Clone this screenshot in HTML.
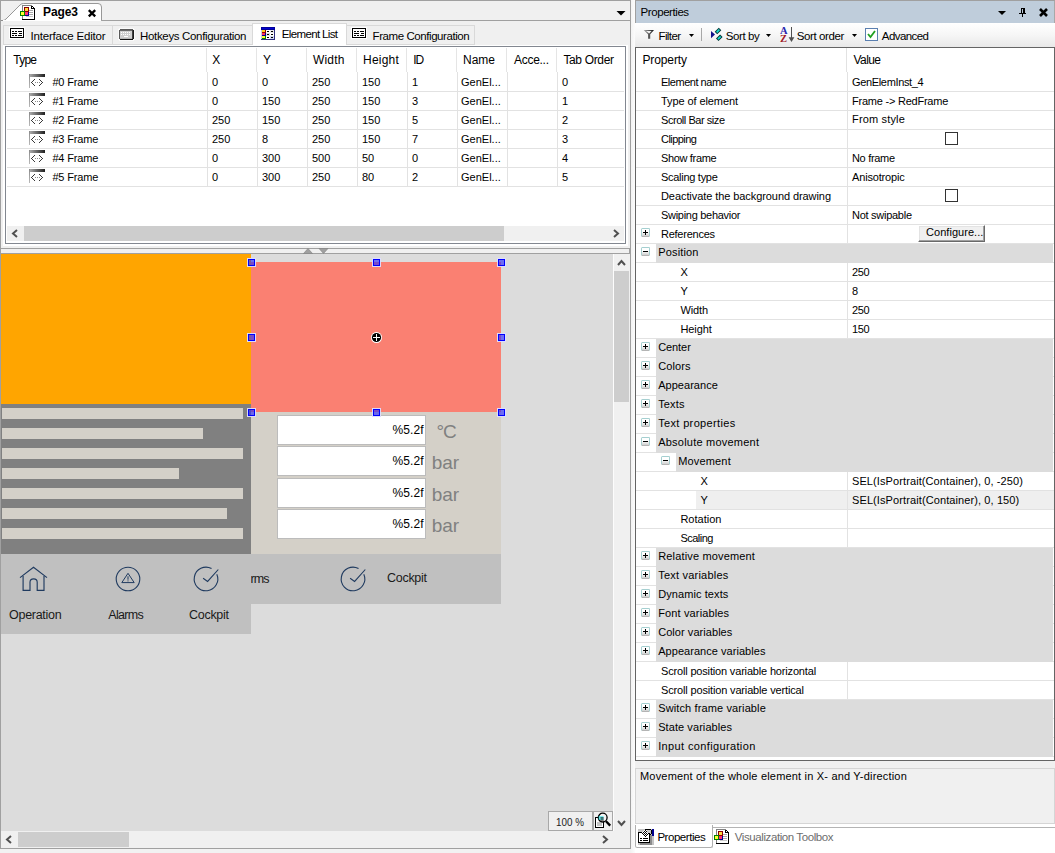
<!DOCTYPE html>
<html><head><meta charset="utf-8"><title>Page3</title>
<style>
html,body{margin:0;padding:0;}
body{width:1055px;height:853px;overflow:hidden;background:#f0f0f0;font-family:"Liberation Sans",sans-serif;font-size:11px;color:#000;position:relative;}
div,span{box-sizing:border-box;}
.a{position:absolute;}
.t{position:absolute;white-space:nowrap;line-height:13px;height:13px;}
.h{font-size:12px;line-height:14px;height:14px;}
.ln{position:absolute;background:#e2e2e2;height:1px;}
.vl{position:absolute;background:#e2e2e2;width:1px;}
.cat{position:absolute;background:#dcdcdc;left:636px;width:418px;height:19px;}
.pm{position:absolute;width:9px;height:9px;border:1px solid #a4cfd0;border-bottom-color:#b4b4b4;background:linear-gradient(#fff 40%,#cfcfcf);border-radius:1.5px;}
.pm i{position:absolute;left:1px;top:3px;width:5px;height:1px;background:#000;}
.pm b{position:absolute;left:3px;top:1px;width:1px;height:5px;background:#000;}
.hd{position:absolute;width:7px;height:7px;background:rgba(40,40,255,0.62);border:1px solid #0000ff;box-shadow:0 0 0 1px rgba(220,220,255,0.95);}
.bar{position:absolute;left:2px;height:11px;background:#d4d0c8;}
.inp{position:absolute;left:277px;width:149px;height:30px;background:#fff;border:1px solid #bcbcbc;}
.cb{position:absolute;width:13px;height:13px;border:1px solid #333;background:#fff;}
</style></head><body>

<div class="a" style="left:0;top:0;width:1055px;height:1px;background:#a0a0a0"></div>
<div class="a" style="left:0;top:20px;width:631px;height:1px;background:#a0a0a0"></div>
<div class="a" style="left:0;top:0px;width:1px;height:853px;background:#a0a0a0"></div>
<div class="a" style="left:630px;top:1px;width:1px;height:848px;background:#a0a0a0"></div>
<div class="a" style="left:631px;top:0px;width:4px;height:853px;background:linear-gradient(90deg,#f3f3f3,#fcfcfc)"></div>
<div class="a" style="left:0;top:848px;width:631px;height:1px;background:#a0a0a0"></div>
<div class="a" style="left:0;top:849px;width:631px;height:4px;background:#f2f2f2"></div>
<svg class="a" style="left:0;top:0" width="110" height="22" viewBox="0 0 110 22">
<path d="M1 20.5 L3 20.5 Q4.8 20.3 6 19 L20 5 Q21.5 3.5 23.5 3.5 L98 3.5 Q101.5 3.5 101.5 7 L101.5 20.5" fill="#fff" stroke="#8c8c8c" stroke-width="0.9"/>
<rect x="3" y="20" width="98" height="1" fill="#fff"/>
<path d="M88.8 10.1 L95.2 16.4 M95.2 10.1 L88.8 16.4" stroke="#000" stroke-width="2.3" fill="none"/>
</svg>
<svg class="a" style="left:20px;top:5px" width="15" height="15" viewBox="0 0 15 15" shape-rendering="crispEdges">
<rect x="3" y="1" width="11" height="13" fill="#fff"/>
<rect x="2" y="0" width="1" height="15" fill="#808080"/><rect x="2" y="0" width="10" height="1" fill="#808080"/>
<rect x="14" y="3" width="1" height="12" fill="#000"/><rect x="2" y="14" width="13" height="1" fill="#000"/>
<rect x="11" y="1" width="1" height="3" fill="#000"/><rect x="11" y="3" width="4" height="1" fill="#000"/>
<rect x="12" y="1" width="1" height="1" fill="#000"/><rect x="13" y="2" width="1" height="1" fill="#000"/>
<rect x="9" y="5" width="4" height="1" fill="#a8a8a8"/><rect x="9" y="7" width="4" height="1" fill="#a8a8a8"/><rect x="9" y="9" width="4" height="1" fill="#a8a8a8"/><rect x="6" y="11" width="7" height="1" fill="#c8c8c8"/>
<rect x="4" y="2" width="5" height="5" fill="#8b0000"/><rect x="5" y="3" width="3" height="3" fill="#ffd840"/>
<rect x="5" y="7" width="4" height="4" fill="#000090"/><rect x="5" y="7" width="3" height="3" fill="#ff3070"/>
<rect x="0" y="6" width="5" height="5" fill="#008000"/><rect x="1" y="7" width="3" height="3" fill="#ffff30"/>
</svg>
<div class="t" style="left:43px;top:5px;font-size:12px;line-height:14px;height:14px;font-weight:bold;letter-spacing:-0.089px;">Page3</div>
<svg class="a" style="left:616px;top:10px" width="10" height="6"><path d="M0.5 1 L9.5 1 L5 5.5 Z" fill="#000"/></svg>
<div class="a" style="left:3px;top:25px;width:110px;height:20px;background:#f0f0f0;border:1px solid #d9d9d9"></div>
<div class="a" style="left:112px;top:25px;width:141px;height:20px;background:#f0f0f0;border:1px solid #d9d9d9"></div>
<div class="a" style="left:252px;top:23px;width:95px;height:23px;background:#fff;border:1px solid #d9d9d9;border-bottom:none"></div>
<div class="a" style="left:346px;top:25px;width:129px;height:20px;background:#f0f0f0;border:1px solid #d9d9d9"></div>
<svg class="a" style="left:9px;top:27px" width="16" height="12" viewBox="-1 -1 16 12" shape-rendering="crispEdges"><rect x="-1" y="-1" width="16" height="12" fill="#fff"/><rect x="0" y="0" width="14" height="10" fill="#000"/><rect x="1" y="1" width="12" height="8" fill="#fff"/><rect x="2" y="3" width="2" height="1" fill="#000"/><rect x="5" y="3" width="2" height="1" fill="#000"/><rect x="8" y="3" width="4" height="1" fill="#000"/><rect x="2" y="5" width="5" height="1" fill="#000"/><rect x="9" y="5" width="3" height="1" fill="#000"/><rect x="2" y="7" width="2" height="1" fill="#000"/><rect x="5" y="7" width="2" height="1" fill="#000"/><rect x="8" y="7" width="4" height="1" fill="#000"/></svg>
<div class="t" style="left:30.5px;top:29px;font-size:11.5px;line-height:14px;height:14px;letter-spacing:-0.192px;">Interface Editor</div>
<svg class="a" style="left:118px;top:28px" width="17" height="13" viewBox="-1 -1 17 13" shape-rendering="crispEdges"><rect x="0" y="-1" width="15" height="13" fill="#fafafa"/><rect x="-1" y="0" width="17" height="11" fill="#fafafa"/><rect x="1" y="0" width="13" height="1" fill="#5a5a5a"/><rect x="0" y="1" width="1" height="9" fill="#5a5a5a"/><rect x="1" y="1" width="13" height="1" fill="#6a6a6a"/><rect x="14" y="1" width="1" height="9" fill="#1c1c1c"/><rect x="13" y="1" width="1" height="9" fill="#404040"/><rect x="1" y="10" width="13" height="1" fill="#101010"/><rect x="1" y="2" width="12" height="8" fill="#cfcfcf"/><rect x="1" y="9" width="12" height="1" fill="#b8b8b8"/><rect x="2" y="3" width="1" height="1" fill="#fff"/><rect x="4" y="3" width="1" height="1" fill="#fff"/><rect x="6" y="3" width="1" height="1" fill="#fff"/><rect x="8" y="3" width="1" height="1" fill="#fff"/><rect x="10" y="3" width="1" height="1" fill="#fff"/><rect x="2" y="5" width="1" height="1" fill="#fff"/><rect x="4" y="5" width="1" height="1" fill="#fff"/><rect x="6" y="5" width="1" height="1" fill="#fff"/><rect x="8" y="5" width="1" height="1" fill="#fff"/><rect x="10" y="5" width="1" height="1" fill="#fff"/><rect x="5" y="7" width="4" height="1" fill="#fff"/></svg>
<div class="t" style="left:140px;top:29px;font-size:11.5px;line-height:14px;height:14px;letter-spacing:-0.332px;">Hotkeys Configuration</div>
<svg class="a" style="left:261px;top:27px" width="14" height="13" viewBox="0 0 14 13" shape-rendering="crispEdges"><rect x="0" y="0" width="14" height="13" fill="#e8e8f0"/><rect x="0" y="0" width="14" height="3" fill="#000098"/><rect x="1" y="1" width="12" height="1" fill="#0000d0"/><rect x="13" y="3" width="1" height="10" fill="#303080"/><rect x="0" y="12" width="14" height="1" fill="#303080"/><rect x="0" y="3" width="1" height="9" fill="#c8d0e0"/>
<rect x="1" y="3" width="4" height="3" fill="#900000"/><rect x="1" y="3" width="3" height="2" fill="#ffd020"/>
<rect x="1" y="6" width="4" height="3" fill="#000090"/><rect x="1" y="6" width="3" height="2" fill="#ff3060"/>
<rect x="1" y="9" width="4" height="3" fill="#008000"/><rect x="1" y="9" width="3" height="2" fill="#ffff30"/>
<rect x="5" y="3" width="4" height="3" fill="#fff"/><rect x="9" y="3" width="4" height="3" fill="#e8e8e8"/><rect x="5" y="6" width="4" height="3" fill="#e0e0e0"/><rect x="9" y="6" width="4" height="3" fill="#fff"/><rect x="5" y="9" width="4" height="3" fill="#fff"/><rect x="9" y="9" width="4" height="3" fill="#d0d8f0"/>
<rect x="6" y="4" width="2" height="1" fill="#000"/><rect x="10" y="4" width="2" height="1" fill="#000"/><rect x="6" y="7" width="2" height="1" fill="#000"/><rect x="10" y="7" width="2" height="1" fill="#000"/><rect x="6" y="10" width="2" height="1" fill="#000"/><rect x="10" y="10" width="2" height="1" fill="#000"/></svg>
<div class="t" style="left:281.8px;top:27px;font-size:11.5px;line-height:14px;height:14px;letter-spacing:-0.643px;">Element List</div>
<svg class="a" style="left:351px;top:27px" width="16" height="12" viewBox="-1 -1 16 12" shape-rendering="crispEdges"><rect x="-1" y="-1" width="16" height="12" fill="#fff"/><rect x="0" y="0" width="14" height="10" fill="#000"/><rect x="1" y="1" width="12" height="8" fill="#fff"/><rect x="2" y="3" width="2" height="1" fill="#000"/><rect x="5" y="3" width="2" height="1" fill="#000"/><rect x="8" y="3" width="4" height="1" fill="#000"/><rect x="2" y="5" width="5" height="1" fill="#000"/><rect x="9" y="5" width="3" height="1" fill="#000"/><rect x="2" y="7" width="2" height="1" fill="#000"/><rect x="5" y="7" width="2" height="1" fill="#000"/><rect x="8" y="7" width="4" height="1" fill="#000"/></svg>
<div class="t" style="left:372.6px;top:29px;font-size:11.5px;line-height:14px;height:14px;letter-spacing:-0.429px;">Frame Configuration</div>
<div class="a" style="left:3px;top:45px;width:625px;height:201px;background:#fff"></div>
<div class="a" style="left:5px;top:46px;width:621px;height:198px;background:#fff;border:1px solid #828790"></div>
<div class="vl" style="left:206px;top:48px;height:24px;background:#e5e5e5"></div>
<div class="vl" style="left:207px;top:72px;height:115px"></div>
<div class="vl" style="left:256px;top:48px;height:24px;background:#e5e5e5"></div>
<div class="vl" style="left:257px;top:72px;height:115px"></div>
<div class="vl" style="left:306px;top:48px;height:24px;background:#e5e5e5"></div>
<div class="vl" style="left:307px;top:72px;height:115px"></div>
<div class="vl" style="left:356px;top:48px;height:24px;background:#e5e5e5"></div>
<div class="vl" style="left:357px;top:72px;height:115px"></div>
<div class="vl" style="left:406px;top:48px;height:24px;background:#e5e5e5"></div>
<div class="vl" style="left:407px;top:72px;height:115px"></div>
<div class="vl" style="left:456px;top:48px;height:24px;background:#e5e5e5"></div>
<div class="vl" style="left:457px;top:72px;height:115px"></div>
<div class="vl" style="left:506px;top:48px;height:24px;background:#e5e5e5"></div>
<div class="vl" style="left:507px;top:72px;height:115px"></div>
<div class="vl" style="left:556px;top:48px;height:24px;background:#e5e5e5"></div>
<div class="vl" style="left:557px;top:72px;height:115px"></div>
<div class="t" style="left:13.3px;top:53px;font-size:12px;line-height:14px;height:14px;letter-spacing:-0.772px;">Type</div>
<div class="t" style="left:212.3px;top:53px;font-size:12px;line-height:14px;height:14px;letter-spacing:-1.000px;">X</div>
<div class="t" style="left:263px;top:53px;font-size:12px;line-height:14px;height:14px;letter-spacing:-1.000px;">Y</div>
<div class="t" style="left:313px;top:53px;font-size:12px;line-height:14px;height:14px;letter-spacing:0.181px;">Width</div>
<div class="t" style="left:363px;top:53px;font-size:12px;line-height:14px;height:14px;letter-spacing:0.222px;">Height</div>
<div class="t" style="left:413.2px;top:53px;font-size:12px;line-height:14px;height:14px;letter-spacing:-1.000px;">ID</div>
<div class="t" style="left:463px;top:53px;font-size:12px;line-height:14px;height:14px;letter-spacing:-0.003px;">Name</div>
<div class="t" style="left:514px;top:53px;font-size:12px;line-height:14px;height:14px;letter-spacing:-0.280px;">Acce...</div>
<div class="t" style="left:563.4px;top:53px;font-size:12px;line-height:14px;height:14px;letter-spacing:-0.345px;">Tab Order</div>
<div class="ln" style="left:7px;top:91px;width:617px"></div>
<svg class="a" style="left:29px;top:74px" width="16" height="14" viewBox="0 0 16 14"><defs><linearGradient id="g0" x1="0" x2="1" y1="0" y2="0"><stop offset="0" stop-color="#b0b0b0"/><stop offset="1" stop-color="#202020"/></linearGradient><linearGradient id="v0" x1="0" x2="0" y1="0" y2="1"><stop offset="0" stop-color="#8a8a8a"/><stop offset="1" stop-color="#b8b8b8"/></linearGradient></defs><rect x="0" y="0" width="16" height="3" fill="url(#g0)"/><rect x="0" y="0" width="1" height="14" fill="url(#v0)"/><g shape-rendering="crispEdges"><rect x="2" y="8" width="1" height="1" fill="#383838"/><rect x="3" y="7" width="1" height="1" fill="#383838"/><rect x="4" y="6" width="1" height="1" fill="#383838"/><rect x="5" y="5" width="1" height="1" fill="#383838"/><rect x="3" y="9" width="1" height="1" fill="#383838"/><rect x="4" y="10" width="1" height="1" fill="#383838"/><rect x="5" y="11" width="1" height="1" fill="#383838"/><rect x="13" y="8" width="1" height="1" fill="#383838"/><rect x="12" y="7" width="1" height="1" fill="#383838"/><rect x="11" y="6" width="1" height="1" fill="#383838"/><rect x="10" y="5" width="1" height="1" fill="#383838"/><rect x="12" y="9" width="1" height="1" fill="#383838"/><rect x="11" y="10" width="1" height="1" fill="#383838"/><rect x="10" y="11" width="1" height="1" fill="#383838"/><rect x="6" y="8" width="1" height="1" fill="#8a8a8a"/><rect x="8" y="8" width="1" height="1" fill="#8a8a8a"/><rect x="10" y="8" width="1" height="1" fill="#8a8a8a"/></g></svg>
<div class="t" style="left:52.4px;top:76px;font-size:11px;line-height:13px;height:13px;letter-spacing:-0.167px;">#0 Frame</div>
<div class="t" style="left:212px;top:76px">0</div>
<div class="t" style="left:262px;top:76px">0</div>
<div class="t" style="left:312px;top:76px">250</div>
<div class="t" style="left:362px;top:76px">150</div>
<div class="t" style="left:412px;top:76px">1</div>
<div class="t" style="left:461px;top:76px">GenEl...</div>
<div class="t" style="left:562px;top:76px">0</div>
<div class="ln" style="left:7px;top:110px;width:617px"></div>
<svg class="a" style="left:29px;top:93px" width="16" height="14" viewBox="0 0 16 14"><defs><linearGradient id="g1" x1="0" x2="1" y1="0" y2="0"><stop offset="0" stop-color="#b0b0b0"/><stop offset="1" stop-color="#202020"/></linearGradient><linearGradient id="v1" x1="0" x2="0" y1="0" y2="1"><stop offset="0" stop-color="#8a8a8a"/><stop offset="1" stop-color="#b8b8b8"/></linearGradient></defs><rect x="0" y="0" width="16" height="3" fill="url(#g1)"/><rect x="0" y="0" width="1" height="14" fill="url(#v1)"/><g shape-rendering="crispEdges"><rect x="2" y="8" width="1" height="1" fill="#383838"/><rect x="3" y="7" width="1" height="1" fill="#383838"/><rect x="4" y="6" width="1" height="1" fill="#383838"/><rect x="5" y="5" width="1" height="1" fill="#383838"/><rect x="3" y="9" width="1" height="1" fill="#383838"/><rect x="4" y="10" width="1" height="1" fill="#383838"/><rect x="5" y="11" width="1" height="1" fill="#383838"/><rect x="13" y="8" width="1" height="1" fill="#383838"/><rect x="12" y="7" width="1" height="1" fill="#383838"/><rect x="11" y="6" width="1" height="1" fill="#383838"/><rect x="10" y="5" width="1" height="1" fill="#383838"/><rect x="12" y="9" width="1" height="1" fill="#383838"/><rect x="11" y="10" width="1" height="1" fill="#383838"/><rect x="10" y="11" width="1" height="1" fill="#383838"/><rect x="6" y="8" width="1" height="1" fill="#8a8a8a"/><rect x="8" y="8" width="1" height="1" fill="#8a8a8a"/><rect x="10" y="8" width="1" height="1" fill="#8a8a8a"/></g></svg>
<div class="t" style="left:52.4px;top:95px;font-size:11px;line-height:13px;height:13px;letter-spacing:-0.167px;">#1 Frame</div>
<div class="t" style="left:212px;top:95px">0</div>
<div class="t" style="left:262px;top:95px">150</div>
<div class="t" style="left:312px;top:95px">250</div>
<div class="t" style="left:362px;top:95px">150</div>
<div class="t" style="left:412px;top:95px">3</div>
<div class="t" style="left:461px;top:95px">GenEl...</div>
<div class="t" style="left:562px;top:95px">1</div>
<div class="ln" style="left:7px;top:129px;width:617px"></div>
<svg class="a" style="left:29px;top:112px" width="16" height="14" viewBox="0 0 16 14"><defs><linearGradient id="g2" x1="0" x2="1" y1="0" y2="0"><stop offset="0" stop-color="#b0b0b0"/><stop offset="1" stop-color="#202020"/></linearGradient><linearGradient id="v2" x1="0" x2="0" y1="0" y2="1"><stop offset="0" stop-color="#8a8a8a"/><stop offset="1" stop-color="#b8b8b8"/></linearGradient></defs><rect x="0" y="0" width="16" height="3" fill="url(#g2)"/><rect x="0" y="0" width="1" height="14" fill="url(#v2)"/><g shape-rendering="crispEdges"><rect x="2" y="8" width="1" height="1" fill="#383838"/><rect x="3" y="7" width="1" height="1" fill="#383838"/><rect x="4" y="6" width="1" height="1" fill="#383838"/><rect x="5" y="5" width="1" height="1" fill="#383838"/><rect x="3" y="9" width="1" height="1" fill="#383838"/><rect x="4" y="10" width="1" height="1" fill="#383838"/><rect x="5" y="11" width="1" height="1" fill="#383838"/><rect x="13" y="8" width="1" height="1" fill="#383838"/><rect x="12" y="7" width="1" height="1" fill="#383838"/><rect x="11" y="6" width="1" height="1" fill="#383838"/><rect x="10" y="5" width="1" height="1" fill="#383838"/><rect x="12" y="9" width="1" height="1" fill="#383838"/><rect x="11" y="10" width="1" height="1" fill="#383838"/><rect x="10" y="11" width="1" height="1" fill="#383838"/><rect x="6" y="8" width="1" height="1" fill="#8a8a8a"/><rect x="8" y="8" width="1" height="1" fill="#8a8a8a"/><rect x="10" y="8" width="1" height="1" fill="#8a8a8a"/></g></svg>
<div class="t" style="left:52.4px;top:114px;font-size:11px;line-height:13px;height:13px;letter-spacing:-0.167px;">#2 Frame</div>
<div class="t" style="left:212px;top:114px">250</div>
<div class="t" style="left:262px;top:114px">150</div>
<div class="t" style="left:312px;top:114px">250</div>
<div class="t" style="left:362px;top:114px">150</div>
<div class="t" style="left:412px;top:114px">5</div>
<div class="t" style="left:461px;top:114px">GenEl...</div>
<div class="t" style="left:562px;top:114px">2</div>
<div class="ln" style="left:7px;top:148px;width:617px"></div>
<svg class="a" style="left:29px;top:131px" width="16" height="14" viewBox="0 0 16 14"><defs><linearGradient id="g3" x1="0" x2="1" y1="0" y2="0"><stop offset="0" stop-color="#b0b0b0"/><stop offset="1" stop-color="#202020"/></linearGradient><linearGradient id="v3" x1="0" x2="0" y1="0" y2="1"><stop offset="0" stop-color="#8a8a8a"/><stop offset="1" stop-color="#b8b8b8"/></linearGradient></defs><rect x="0" y="0" width="16" height="3" fill="url(#g3)"/><rect x="0" y="0" width="1" height="14" fill="url(#v3)"/><g shape-rendering="crispEdges"><rect x="2" y="8" width="1" height="1" fill="#383838"/><rect x="3" y="7" width="1" height="1" fill="#383838"/><rect x="4" y="6" width="1" height="1" fill="#383838"/><rect x="5" y="5" width="1" height="1" fill="#383838"/><rect x="3" y="9" width="1" height="1" fill="#383838"/><rect x="4" y="10" width="1" height="1" fill="#383838"/><rect x="5" y="11" width="1" height="1" fill="#383838"/><rect x="13" y="8" width="1" height="1" fill="#383838"/><rect x="12" y="7" width="1" height="1" fill="#383838"/><rect x="11" y="6" width="1" height="1" fill="#383838"/><rect x="10" y="5" width="1" height="1" fill="#383838"/><rect x="12" y="9" width="1" height="1" fill="#383838"/><rect x="11" y="10" width="1" height="1" fill="#383838"/><rect x="10" y="11" width="1" height="1" fill="#383838"/><rect x="6" y="8" width="1" height="1" fill="#8a8a8a"/><rect x="8" y="8" width="1" height="1" fill="#8a8a8a"/><rect x="10" y="8" width="1" height="1" fill="#8a8a8a"/></g></svg>
<div class="t" style="left:52.4px;top:133px;font-size:11px;line-height:13px;height:13px;letter-spacing:-0.167px;">#3 Frame</div>
<div class="t" style="left:212px;top:133px">250</div>
<div class="t" style="left:262px;top:133px">8</div>
<div class="t" style="left:312px;top:133px">250</div>
<div class="t" style="left:362px;top:133px">150</div>
<div class="t" style="left:412px;top:133px">7</div>
<div class="t" style="left:461px;top:133px">GenEl...</div>
<div class="t" style="left:562px;top:133px">3</div>
<div class="ln" style="left:7px;top:167px;width:617px"></div>
<svg class="a" style="left:29px;top:150px" width="16" height="14" viewBox="0 0 16 14"><defs><linearGradient id="g4" x1="0" x2="1" y1="0" y2="0"><stop offset="0" stop-color="#b0b0b0"/><stop offset="1" stop-color="#202020"/></linearGradient><linearGradient id="v4" x1="0" x2="0" y1="0" y2="1"><stop offset="0" stop-color="#8a8a8a"/><stop offset="1" stop-color="#b8b8b8"/></linearGradient></defs><rect x="0" y="0" width="16" height="3" fill="url(#g4)"/><rect x="0" y="0" width="1" height="14" fill="url(#v4)"/><g shape-rendering="crispEdges"><rect x="2" y="8" width="1" height="1" fill="#383838"/><rect x="3" y="7" width="1" height="1" fill="#383838"/><rect x="4" y="6" width="1" height="1" fill="#383838"/><rect x="5" y="5" width="1" height="1" fill="#383838"/><rect x="3" y="9" width="1" height="1" fill="#383838"/><rect x="4" y="10" width="1" height="1" fill="#383838"/><rect x="5" y="11" width="1" height="1" fill="#383838"/><rect x="13" y="8" width="1" height="1" fill="#383838"/><rect x="12" y="7" width="1" height="1" fill="#383838"/><rect x="11" y="6" width="1" height="1" fill="#383838"/><rect x="10" y="5" width="1" height="1" fill="#383838"/><rect x="12" y="9" width="1" height="1" fill="#383838"/><rect x="11" y="10" width="1" height="1" fill="#383838"/><rect x="10" y="11" width="1" height="1" fill="#383838"/><rect x="6" y="8" width="1" height="1" fill="#8a8a8a"/><rect x="8" y="8" width="1" height="1" fill="#8a8a8a"/><rect x="10" y="8" width="1" height="1" fill="#8a8a8a"/></g></svg>
<div class="t" style="left:52.4px;top:152px;font-size:11px;line-height:13px;height:13px;letter-spacing:-0.167px;">#4 Frame</div>
<div class="t" style="left:212px;top:152px">0</div>
<div class="t" style="left:262px;top:152px">300</div>
<div class="t" style="left:312px;top:152px">500</div>
<div class="t" style="left:362px;top:152px">50</div>
<div class="t" style="left:412px;top:152px">0</div>
<div class="t" style="left:461px;top:152px">GenEl...</div>
<div class="t" style="left:562px;top:152px">4</div>
<div class="ln" style="left:7px;top:186px;width:617px"></div>
<svg class="a" style="left:29px;top:169px" width="16" height="14" viewBox="0 0 16 14"><defs><linearGradient id="g5" x1="0" x2="1" y1="0" y2="0"><stop offset="0" stop-color="#b0b0b0"/><stop offset="1" stop-color="#202020"/></linearGradient><linearGradient id="v5" x1="0" x2="0" y1="0" y2="1"><stop offset="0" stop-color="#8a8a8a"/><stop offset="1" stop-color="#b8b8b8"/></linearGradient></defs><rect x="0" y="0" width="16" height="3" fill="url(#g5)"/><rect x="0" y="0" width="1" height="14" fill="url(#v5)"/><g shape-rendering="crispEdges"><rect x="2" y="8" width="1" height="1" fill="#383838"/><rect x="3" y="7" width="1" height="1" fill="#383838"/><rect x="4" y="6" width="1" height="1" fill="#383838"/><rect x="5" y="5" width="1" height="1" fill="#383838"/><rect x="3" y="9" width="1" height="1" fill="#383838"/><rect x="4" y="10" width="1" height="1" fill="#383838"/><rect x="5" y="11" width="1" height="1" fill="#383838"/><rect x="13" y="8" width="1" height="1" fill="#383838"/><rect x="12" y="7" width="1" height="1" fill="#383838"/><rect x="11" y="6" width="1" height="1" fill="#383838"/><rect x="10" y="5" width="1" height="1" fill="#383838"/><rect x="12" y="9" width="1" height="1" fill="#383838"/><rect x="11" y="10" width="1" height="1" fill="#383838"/><rect x="10" y="11" width="1" height="1" fill="#383838"/><rect x="6" y="8" width="1" height="1" fill="#8a8a8a"/><rect x="8" y="8" width="1" height="1" fill="#8a8a8a"/><rect x="10" y="8" width="1" height="1" fill="#8a8a8a"/></g></svg>
<div class="t" style="left:52.4px;top:171px;font-size:11px;line-height:13px;height:13px;letter-spacing:-0.167px;">#5 Frame</div>
<div class="t" style="left:212px;top:171px">0</div>
<div class="t" style="left:262px;top:171px">300</div>
<div class="t" style="left:312px;top:171px">250</div>
<div class="t" style="left:362px;top:171px">80</div>
<div class="t" style="left:412px;top:171px">2</div>
<div class="t" style="left:461px;top:171px">GenEl...</div>
<div class="t" style="left:562px;top:171px">5</div>
<div class="a" style="left:7px;top:226px;width:617px;height:15px;background:#f0f0f0"></div>
<div class="a" style="left:24px;top:226px;width:480px;height:15px;background:#cdcdcd"></div>
<svg class="a" style="left:11px;top:229px" width="8" height="9"><path d="M6 1 L2 4.5 L6 8" fill="none" stroke="#505050" stroke-width="2"/></svg>
<svg class="a" style="left:612px;top:229px" width="8" height="9"><path d="M2 1 L6 4.5 L2 8" fill="none" stroke="#505050" stroke-width="2"/></svg>
<div class="a" style="left:1px;top:246px;width:629px;height:2px;background:#f0f0f0"></div>
<div class="a" style="left:1px;top:248px;width:629px;height:1px;background:#a0a0a0"></div>
<div class="a" style="left:1px;top:253px;width:629px;height:1px;background:#a0a0a0"></div>
<div class="a" style="left:629px;top:248px;width:1px;height:6px;background:#a0a0a0"></div>
<svg class="a" style="left:302px;top:248px" width="28" height="6"><path d="M1.5 5.5 L6 0.5 L10.5 5.5 Z" fill="#a0a0a0" stroke="#808080" stroke-width="0.6"/><path d="M17 0.5 L26 0.5 L21.5 5.5 Z" fill="#a0a0a0" stroke="#808080" stroke-width="0.6"/></svg>
<div class="a" style="left:1px;top:254px;width:612px;height:577px;background:#dcdcdc;overflow:hidden">
</div>
<div class="a" style="left:1px;top:254px;width:250px;height:150px;background:#ffa500"></div>
<div class="a" style="left:251px;top:262px;width:250px;height:150px;background:#fa8072"></div>
<div class="a" style="left:1px;top:404px;width:250px;height:150px;background:#808080"></div>
<div class="bar" style="top:408px;width:241px"></div>
<div class="bar" style="top:428px;width:201px"></div>
<div class="bar" style="top:448px;width:241px"></div>
<div class="bar" style="top:468px;width:177px"></div>
<div class="bar" style="top:488px;width:241px"></div>
<div class="bar" style="top:508px;width:225px"></div>
<div class="bar" style="top:528px;width:241px"></div>
<div class="a" style="left:251px;top:412px;width:250px;height:142px;background:#d4d0c8"></div>
<div class="inp" style="top:415px"></div>
<div class="t" style="left:392.5px;top:423px;font-size:12px;line-height:14px;height:14px;letter-spacing:0.079px;">%5.2f</div>
<div class="t" style="left:436.5px;top:420px;font-size:19px;line-height:24px;height:24px;color:#808080;letter-spacing:-1.000px;">°C</div>
<div class="inp" style="top:446px"></div>
<div class="t" style="left:392.5px;top:454px;font-size:12px;line-height:14px;height:14px;letter-spacing:0.079px;">%5.2f</div>
<div class="t" style="left:431.7px;top:451px;font-size:19px;line-height:24px;height:24px;color:#808080;letter-spacing:-0.080px;">bar</div>
<div class="inp" style="top:478px"></div>
<div class="t" style="left:392.5px;top:486px;font-size:12px;line-height:14px;height:14px;letter-spacing:0.079px;">%5.2f</div>
<div class="t" style="left:431.7px;top:483px;font-size:19px;line-height:24px;height:24px;color:#808080;letter-spacing:-0.080px;">bar</div>
<div class="inp" style="top:509px"></div>
<div class="t" style="left:392.5px;top:517px;font-size:12px;line-height:14px;height:14px;letter-spacing:0.079px;">%5.2f</div>
<div class="t" style="left:431.7px;top:514px;font-size:19px;line-height:24px;height:24px;color:#808080;letter-spacing:-0.080px;">bar</div>
<div class="a" style="left:251px;top:554px;width:250px;height:50px;background:#c0c0c0"></div>
<div class="a" style="left:1px;top:554px;width:250px;height:80px;background:#c0c0c0"></div>
<svg class="a" style="left:0px;top:554px" width="60" height="50" viewBox="0 554 60 50"><path d="M20 577.6 L33.5 567.2 L47 577.6" fill="none" stroke="#1f3a5f" stroke-width="1.15"/><path d="M23.1 576 L23.1 590.4 L30 590.4 L30 582.2 Q30 578.8 33.6 578.8 Q37.2 578.8 37.2 582.2 L37.2 590.4 L44 590.4 L44 576" fill="none" stroke="#1f3a5f" stroke-width="1.15"/></svg>
<svg class="a" style="left:112.5px;top:563.7px" width="30" height="30" viewBox="0 0 30 30"><circle cx="15" cy="15" r="11.8" fill="none" stroke="#1f3a5f" stroke-width="1.1"/><path d="M15 9.3 L21.2 18.6 L8.8 18.6 Z" fill="none" stroke="#1f3a5f" stroke-width="1"/><rect x="14.5" y="12.3" width="1" height="3.4" fill="#1f3a5f"/><rect x="14.5" y="16.4" width="1" height="1" fill="#1f3a5f"/></svg>
<svg class="a" style="left:191.2px;top:563.7px" width="30" height="30" viewBox="0 0 30 30"><path d="M25.78 10.20 A11.8 11.8 0 1 1 20.54 4.58" fill="none" stroke="#1f3a5f" stroke-width="1.1"/><path d="M12.1 14.3 L16.6 17.4 L27.3 5.5" fill="none" stroke="#1f3a5f" stroke-width="1.1"/></svg>
<div class="t" style="left:9.1px;top:608px;font-size:12.5px;line-height:15px;height:15px;color:#1a1a1a;letter-spacing:-0.299px;">Operation</div>
<div class="t" style="left:108.3px;top:608px;font-size:12.5px;line-height:15px;height:15px;color:#1a1a1a;letter-spacing:-0.678px;">Alarms</div>
<div class="t" style="left:189px;top:608px;font-size:12.5px;line-height:15px;height:15px;color:#1a1a1a;letter-spacing:-0.280px;">Cockpit</div>
<div class="a" style="left:251px;top:572px;width:30px;height:15px;overflow:hidden"><div class="t" style="left:-0.4px;top:0px;font-size:12.5px;line-height:15px;height:15px;color:#1a1a1a;letter-spacing:-1.000px;">rms</div></div>
<svg class="a" style="left:337.8px;top:564px" width="30" height="30" viewBox="0 0 30 30"><path d="M25.78 10.20 A11.8 11.8 0 1 1 20.54 4.58" fill="none" stroke="#1f3a5f" stroke-width="1.1"/><path d="M12.1 14.3 L16.6 17.4 L27.3 5.5" fill="none" stroke="#1f3a5f" stroke-width="1.1"/></svg>
<div class="t" style="left:387px;top:571px;font-size:12.5px;line-height:15px;height:15px;color:#1a1a1a;letter-spacing:-0.280px;">Cockpit</div>
<div class="hd" style="left:248px;top:259px"></div>
<div class="hd" style="left:373px;top:259px"></div>
<div class="hd" style="left:498px;top:259px"></div>
<div class="hd" style="left:248px;top:334px"></div>
<div class="hd" style="left:498px;top:334px"></div>
<div class="hd" style="left:248px;top:409px"></div>
<div class="hd" style="left:373px;top:409px"></div>
<div class="hd" style="left:498px;top:409px"></div>
<svg class="a" style="left:370px;top:331px" width="13" height="13" viewBox="0 0 13 13"><circle cx="6.5" cy="6.5" r="5.5" fill="#fff"/><circle cx="6.5" cy="6.5" r="4.6" fill="#000"/><rect x="6" y="3" width="1" height="7" fill="#fff"/><rect x="3" y="6" width="7" height="1" fill="#fff"/></svg>
<div class="a" style="left:613px;top:254px;width:17px;height:577px;background:#f0f0f0"></div>
<div class="a" style="left:613px;top:254px;width:1px;height:577px;background:#fcfcfc"></div>
<div class="a" style="left:614px;top:271px;width:15px;height:131px;background:#cdcdcd"></div>
<svg class="a" style="left:617px;top:259px" width="9" height="8"><path d="M1 6 L4.5 2 L8 6" fill="none" stroke="#505050" stroke-width="2"/></svg>
<svg class="a" style="left:617px;top:819px" width="9" height="8"><path d="M1 2 L4.5 6 L8 2" fill="none" stroke="#505050" stroke-width="2"/></svg>
<div class="a" style="left:1px;top:831px;width:629px;height:17px;background:#f0f0f0"></div>
<div class="a" style="left:18px;top:832px;width:111px;height:15px;background:#cdcdcd"></div>
<svg class="a" style="left:5px;top:835px" width="8" height="9"><path d="M6 1 L2 4.5 L6 8" fill="none" stroke="#505050" stroke-width="2"/></svg>
<svg class="a" style="left:601px;top:835px" width="8" height="9"><path d="M2 1 L6 4.5 L2 8" fill="none" stroke="#505050" stroke-width="2"/></svg>
<div class="a" style="left:548px;top:811px;width:45px;height:20px;background:#f0f0f0;border:1px solid #a8a8a8"></div>
<div class="t" style="left:555.8px;top:815px;font-size:11.5px;line-height:14px;height:14px;color:#222;transform:scaleX(0.8556);transform-origin:0 0;">100 %</div>
<div class="a" style="left:593px;top:811px;width:20px;height:20px;background:#f0f0f0;border:1px solid #a8a8a8"></div>
<svg class="a" style="left:595px;top:812px" width="17" height="17" viewBox="0 0 17 17"><rect x="0.5" y="5.5" width="8" height="10" fill="#fff" stroke="#000"/><rect x="2" y="10" width="5" height="4" fill="#c4c4c4"/><circle cx="7.7" cy="5.6" r="4.4" fill="#f4f4f4" fill-opacity="0.85" stroke="#000" stroke-width="1.3"/><path d="M11 9.2 L15.2 13.6" stroke="#000" stroke-width="2.3"/><rect x="3.5" y="4.5" width="5" height="1" fill="#00e8f0"/><rect x="3.5" y="6.5" width="5" height="1" fill="#00e8f0"/><rect x="5.5" y="5.5" width="3" height="1" fill="#000"/><rect x="5.5" y="7.5" width="3" height="1" fill="#000"/></svg><div class="a" style="left:635px;top:1px;width:420px;height:22px;background:#bfcddb"></div>
<div class="a" style="left:635px;top:0px;width:1px;height:23px;background:#a0a0a0"></div>
<div class="t" style="left:640.6px;top:5px;font-size:11.5px;line-height:14px;height:14px;letter-spacing:-0.435px;">Properties</div>
<svg class="a" style="left:998px;top:11px" width="9" height="5"><path d="M0 0 L8 0 L4 4 Z" fill="#000"/></svg>
<svg class="a" style="left:1019px;top:8px" width="7" height="10" viewBox="0 0 7 10" shape-rendering="crispEdges"><rect x="2" y="0" width="4" height="1" fill="#000"/><rect x="2" y="0" width="1" height="5" fill="#000"/><rect x="4" y="0" width="2" height="5" fill="#000"/><rect x="0" y="5" width="7" height="1" fill="#000"/><rect x="3" y="6" width="1" height="3" fill="#000"/></svg>
<svg class="a" style="left:1038px;top:7px" width="11" height="11"><path d="M2 2 L9 9 M9 2 L2 9" stroke="#000" stroke-width="2.6" fill="none"/></svg>
<div class="a" style="left:1054px;top:1px;width:1px;height:22px;background:#a8a8a8"></div>
<div class="a" style="left:635px;top:23px;width:420px;height:24px;background:linear-gradient(#ffffff,#f6f6f6 50%,#e8e8e8)"></div>
<svg class="a" style="left:643px;top:29px" width="12" height="11" viewBox="0 0 12 11"><defs><linearGradient id="fg" x1="0" x2="1"><stop offset="0" stop-color="#b0b0b0"/><stop offset="0.5" stop-color="#606060"/><stop offset="1" stop-color="#101010"/></linearGradient></defs><path d="M0.6 1 L11 1 L7.2 5.2 L7.2 9.8 L5 9.8 L5 5.2 Z" fill="url(#fg)"/><path d="M3 2 L8.6 2 L6.1 4.6 Z" fill="#f2f2f2"/></svg>
<div class="t" style="left:658.5px;top:29px;font-size:11.5px;line-height:14px;height:14px;letter-spacing:-0.611px;">Filter</div>
<svg class="a" style="left:689px;top:34px" width="5" height="3"><path d="M0 0 L5 0 L2.5 3 Z" fill="#000"/></svg>
<div class="a" style="left:701px;top:28px;width:1px;height:13px;background:#a8a8a8"></div>
<svg class="a" style="left:710px;top:27px" width="15" height="15" viewBox="0 0 15 15"><path d="M1 4 L5 7.6 L1 11.2 Z" fill="#10108a"/><rect x="5.6" y="2.7" width="4.8" height="2.6" transform="rotate(-45 8 4)" fill="#10e0d8" stroke="#083838" stroke-width="1"/><rect x="6.9" y="9.5" width="4.8" height="2.6" transform="rotate(-45 9.3 10.8)" fill="#10e0d8" stroke="#083838" stroke-width="1"/></svg>
<div class="t" style="left:725.8px;top:29px;font-size:11.5px;line-height:14px;height:14px;letter-spacing:-0.405px;">Sort by</div>
<svg class="a" style="left:766px;top:34px" width="5" height="3"><path d="M0 0 L5 0 L2.5 3 Z" fill="#000"/></svg>
<div class="t" style="left:780px;top:26px;font-family:'Liberation Serif',serif;font-size:10.5px;font-weight:bold;color:#2828b0;line-height:9px;height:9px">A</div>
<div class="t" style="left:780px;top:34px;font-family:'Liberation Serif',serif;font-size:10.5px;font-weight:bold;color:#a01828;line-height:9px;height:9px">Z</div>
<svg class="a" style="left:788px;top:26px" width="7" height="17" viewBox="0 0 7 17"><rect x="3" y="1" width="1" height="11.5" fill="#505050"/><path d="M0.6 11.3 L6.4 11.3 L3.5 16 Z" fill="#505050"/></svg>
<div class="t" style="left:796.7px;top:29px;font-size:11.5px;line-height:14px;height:14px;letter-spacing:-0.392px;">Sort order</div>
<svg class="a" style="left:852px;top:34px" width="5" height="3"><path d="M0 0 L5 0 L2.5 3 Z" fill="#000"/></svg>
<div class="a" style="left:865px;top:28px;width:13px;height:13px;border:1px solid #5a7fb0;background:#fff"></div>
<svg class="a" style="left:867px;top:30px" width="9" height="9"><path d="M1 4 L3.5 7 L8 1" stroke="#20a020" stroke-width="1.8" fill="none"/></svg>
<div class="t" style="left:881.8px;top:29px;font-size:11.5px;line-height:14px;height:14px;letter-spacing:-0.564px;">Advanced</div>
<div class="a" style="left:635px;top:47px;width:420px;height:714px;background:#fff;border:1px solid #646464"></div>
<div class="t" style="left:642.4px;top:53px;font-size:12px;line-height:14px;height:14px;letter-spacing:-0.107px;">Property</div>
<div class="t" style="left:853.6px;top:53px;font-size:12px;line-height:14px;height:14px;letter-spacing:-0.600px;">Value</div>
<div class="vl" style="left:846px;top:48px;height:24px"></div>
<div class="ln" style="left:636px;top:91px;width:418px"></div>
<div class="vl" style="left:847px;top:72px;height:19px"></div>
<div class="t" style="left:661px;top:76px;font-size:11px;line-height:13px;height:13px;letter-spacing:-0.475px;">Element name</div>
<div class="t" style="left:852px;top:76px;font-size:11px;line-height:13px;height:13px;letter-spacing:-0.343px;">GenElemInst_4</div>
<div class="ln" style="left:636px;top:110px;width:418px"></div>
<div class="vl" style="left:847px;top:92px;height:18px"></div>
<div class="t" style="left:661px;top:95px;font-size:11px;line-height:13px;height:13px;letter-spacing:-0.091px;">Type of element</div>
<div class="t" style="left:852px;top:95px;font-size:11px;line-height:13px;height:13px;letter-spacing:-0.228px;">Frame -&gt; RedFrame</div>
<div class="ln" style="left:636px;top:129px;width:418px"></div>
<div class="vl" style="left:847px;top:111px;height:18px"></div>
<div class="t" style="left:661px;top:114px;font-size:11px;line-height:13px;height:13px;letter-spacing:-0.450px;">Scroll Bar size</div>
<div class="t" style="left:852px;top:113px;font-size:11px;line-height:13px;height:13px;letter-spacing:0.163px;">From style</div>
<div class="ln" style="left:636px;top:148px;width:418px"></div>
<div class="vl" style="left:847px;top:130px;height:18px"></div>
<div class="t" style="left:661px;top:133px;font-size:11px;line-height:13px;height:13px;letter-spacing:-0.549px;">Clipping</div>
<div class="cb" style="left:945px;top:132px"></div>
<div class="ln" style="left:636px;top:167px;width:418px"></div>
<div class="vl" style="left:847px;top:149px;height:18px"></div>
<div class="t" style="left:661px;top:152px;font-size:11px;line-height:13px;height:13px;letter-spacing:-0.343px;">Show frame</div>
<div class="t" style="left:852px;top:152px;font-size:11px;line-height:13px;height:13px;letter-spacing:-0.319px;">No frame</div>
<div class="ln" style="left:636px;top:186px;width:418px"></div>
<div class="vl" style="left:847px;top:168px;height:18px"></div>
<div class="t" style="left:661px;top:171px;font-size:11px;line-height:13px;height:13px;letter-spacing:-0.284px;">Scaling type</div>
<div class="t" style="left:852px;top:171px;font-size:11px;line-height:13px;height:13px;letter-spacing:-0.161px;">Anisotropic</div>
<div class="ln" style="left:636px;top:205px;width:418px"></div>
<div class="vl" style="left:847px;top:187px;height:18px"></div>
<div class="t" style="left:661px;top:190px;font-size:11px;line-height:13px;height:13px;letter-spacing:-0.076px;">Deactivate the background drawing</div>
<div class="cb" style="left:945px;top:189px"></div>
<div class="ln" style="left:636px;top:224px;width:418px"></div>
<div class="vl" style="left:847px;top:206px;height:18px"></div>
<div class="t" style="left:661px;top:209px;font-size:11px;line-height:13px;height:13px;letter-spacing:-0.292px;">Swiping behavior</div>
<div class="t" style="left:852px;top:209px;font-size:11px;line-height:13px;height:13px;letter-spacing:-0.271px;">Not swipable</div>
<div class="ln" style="left:636px;top:243px;width:418px"></div>
<div class="vl" style="left:847px;top:225px;height:18px"></div>
<div class="pm" style="left:641px;top:228px"><i></i><b></b></div>
<div class="t" style="left:661px;top:228px;font-size:11px;line-height:13px;height:13px;letter-spacing:-0.250px;">References</div>
<div class="a" style="left:918px;top:225px;width:67px;height:17px;background:#f0f0f0;border:1px solid #fff;border-right-color:#696969;border-bottom-color:#696969;box-shadow:inset -1px -1px 0 #a0a0a0, inset 1px 1px 0 #e3e3e3"></div>
<div class="t" style="left:926px;top:226px;font-size:11px;line-height:13px;height:13px;letter-spacing:0.040px;">Configure...</div>
<div class="ln" style="left:636px;top:262px;width:418px"></div>
<div class="a" style="left:656px;top:244px;width:397px;height:19px;background:#dcdcdc"></div>
<div class="pm" style="left:641px;top:247px"><i></i></div>
<div class="t" style="left:658.2px;top:246px;font-size:11px;line-height:13px;height:13px;letter-spacing:0.167px;">Position</div>
<div class="ln" style="left:636px;top:281px;width:418px"></div>
<div class="vl" style="left:847px;top:263px;height:18px"></div>
<div class="t" style="left:680.4px;top:266px;font-size:11px;line-height:13px;height:13px;letter-spacing:-0.737px;">X</div>
<div class="t" style="left:852px;top:266px;font-size:11px;line-height:13px;height:13px;letter-spacing:-0.326px;">250</div>
<div class="ln" style="left:636px;top:300px;width:418px"></div>
<div class="vl" style="left:847px;top:282px;height:18px"></div>
<div class="t" style="left:680.4px;top:285px;font-size:11px;line-height:13px;height:13px;letter-spacing:-0.737px;">Y</div>
<div class="t" style="left:852px;top:285px;font-size:11px;line-height:13px;height:13px;letter-spacing:0.182px;">8</div>
<div class="ln" style="left:636px;top:319px;width:418px"></div>
<div class="vl" style="left:847px;top:301px;height:18px"></div>
<div class="t" style="left:680.4px;top:304px;font-size:11px;line-height:13px;height:13px;letter-spacing:-0.079px;">Width</div>
<div class="t" style="left:852px;top:304px;font-size:11px;line-height:13px;height:13px;letter-spacing:-0.326px;">250</div>
<div class="ln" style="left:636px;top:338px;width:418px"></div>
<div class="vl" style="left:847px;top:320px;height:18px"></div>
<div class="t" style="left:680.4px;top:323px;font-size:11px;line-height:13px;height:13px;letter-spacing:-0.079px;">Height</div>
<div class="t" style="left:852px;top:323px;font-size:11px;line-height:13px;height:13px;letter-spacing:-0.326px;">150</div>
<div class="ln" style="left:636px;top:357px;width:418px"></div>
<div class="a" style="left:656px;top:339px;width:397px;height:19px;background:#dcdcdc"></div>
<div class="pm" style="left:641px;top:342px"><i></i><b></b></div>
<div class="t" style="left:658.2px;top:341px;font-size:11px;line-height:13px;height:13px;letter-spacing:-0.083px;">Center</div>
<div class="ln" style="left:636px;top:376px;width:418px"></div>
<div class="a" style="left:656px;top:358px;width:397px;height:19px;background:#dcdcdc"></div>
<div class="pm" style="left:641px;top:361px"><i></i><b></b></div>
<div class="t" style="left:658.2px;top:360px;font-size:11px;line-height:13px;height:13px;letter-spacing:0.083px;">Colors</div>
<div class="ln" style="left:636px;top:395px;width:418px"></div>
<div class="a" style="left:656px;top:377px;width:397px;height:19px;background:#dcdcdc"></div>
<div class="pm" style="left:641px;top:380px"><i></i><b></b></div>
<div class="t" style="left:658.2px;top:379px;font-size:11px;line-height:13px;height:13px;letter-spacing:0.031px;">Appearance</div>
<div class="ln" style="left:636px;top:414px;width:418px"></div>
<div class="a" style="left:656px;top:396px;width:397px;height:19px;background:#dcdcdc"></div>
<div class="pm" style="left:641px;top:399px"><i></i><b></b></div>
<div class="t" style="left:658.2px;top:398px;font-size:11px;line-height:13px;height:13px;letter-spacing:0.132px;">Texts</div>
<div class="ln" style="left:636px;top:433px;width:418px"></div>
<div class="a" style="left:656px;top:415px;width:397px;height:19px;background:#dcdcdc"></div>
<div class="pm" style="left:641px;top:418px"><i></i><b></b></div>
<div class="t" style="left:658.2px;top:417px;font-size:11px;line-height:13px;height:13px;letter-spacing:0.347px;">Text properties</div>
<div class="ln" style="left:636px;top:452px;width:418px"></div>
<div class="a" style="left:656px;top:434px;width:397px;height:19px;background:#dcdcdc"></div>
<div class="pm" style="left:641px;top:437px"><i></i></div>
<div class="t" style="left:658.2px;top:436px;font-size:11px;line-height:13px;height:13px;letter-spacing:0.224px;">Absolute movement</div>
<div class="ln" style="left:636px;top:471px;width:418px"></div>
<div class="a" style="left:676px;top:453px;width:377px;height:19px;background:#dcdcdc"></div>
<div class="pm" style="left:661px;top:456px"><i></i></div>
<div class="t" style="left:678.2px;top:455px;font-size:11px;line-height:13px;height:13px;letter-spacing:0.164px;">Movement</div>
<div class="ln" style="left:636px;top:490px;width:418px"></div>
<div class="vl" style="left:847px;top:472px;height:18px"></div>
<div class="t" style="left:700.5px;top:475px;font-size:11px;line-height:13px;height:13px;letter-spacing:-0.837px;">X</div>
<div class="t" style="left:852px;top:475px;font-size:11px;line-height:13px;height:13px;letter-spacing:0.097px;">SEL(IsPortrait(Container), 0, -250)</div>
<div class="ln" style="left:636px;top:509px;width:418px"></div>
<div class="vl" style="left:847px;top:491px;height:18px"></div>
<div class="a" style="left:696px;top:491px;width:151px;height:18px;background:#efefef"></div>
<div class="a" style="left:848px;top:491px;width:206px;height:18px;background:#efefef"></div>
<div class="t" style="left:700.5px;top:494px;font-size:11px;line-height:13px;height:13px;letter-spacing:-0.837px;">Y</div>
<div class="t" style="left:852px;top:494px;font-size:11px;line-height:13px;height:13px;letter-spacing:0.102px;">SEL(IsPortrait(Container), 0, 150)</div>
<div class="ln" style="left:636px;top:528px;width:418px"></div>
<div class="vl" style="left:847px;top:510px;height:18px"></div>
<div class="t" style="left:680.4px;top:513px;font-size:11px;line-height:13px;height:13px;letter-spacing:0.018px;">Rotation</div>
<div class="ln" style="left:636px;top:547px;width:418px"></div>
<div class="vl" style="left:847px;top:529px;height:18px"></div>
<div class="t" style="left:680.4px;top:532px;font-size:11px;line-height:13px;height:13px;letter-spacing:-0.513px;">Scaling</div>
<div class="ln" style="left:636px;top:566px;width:418px"></div>
<div class="a" style="left:656px;top:548px;width:397px;height:19px;background:#dcdcdc"></div>
<div class="pm" style="left:641px;top:551px"><i></i><b></b></div>
<div class="t" style="left:658.2px;top:550px;font-size:11px;line-height:13px;height:13px;letter-spacing:0.159px;">Relative movement</div>
<div class="ln" style="left:636px;top:585px;width:418px"></div>
<div class="a" style="left:656px;top:567px;width:397px;height:19px;background:#dcdcdc"></div>
<div class="pm" style="left:641px;top:570px"><i></i><b></b></div>
<div class="t" style="left:658.2px;top:569px;font-size:11px;line-height:13px;height:13px;letter-spacing:0.219px;">Text variables</div>
<div class="ln" style="left:636px;top:604px;width:418px"></div>
<div class="a" style="left:656px;top:586px;width:397px;height:19px;background:#dcdcdc"></div>
<div class="pm" style="left:641px;top:589px"><i></i><b></b></div>
<div class="t" style="left:658.2px;top:588px;font-size:11px;line-height:13px;height:13px;letter-spacing:0.086px;">Dynamic texts</div>
<div class="ln" style="left:636px;top:623px;width:418px"></div>
<div class="a" style="left:656px;top:605px;width:397px;height:19px;background:#dcdcdc"></div>
<div class="pm" style="left:641px;top:608px"><i></i><b></b></div>
<div class="t" style="left:658.2px;top:607px;font-size:11px;line-height:13px;height:13px;letter-spacing:0.139px;">Font variables</div>
<div class="ln" style="left:636px;top:642px;width:418px"></div>
<div class="a" style="left:656px;top:624px;width:397px;height:19px;background:#dcdcdc"></div>
<div class="pm" style="left:641px;top:627px"><i></i><b></b></div>
<div class="t" style="left:658.2px;top:626px;font-size:11px;line-height:13px;height:13px;letter-spacing:0.053px;">Color variables</div>
<div class="ln" style="left:636px;top:661px;width:418px"></div>
<div class="a" style="left:656px;top:643px;width:397px;height:19px;background:#dcdcdc"></div>
<div class="pm" style="left:641px;top:646px"><i></i><b></b></div>
<div class="t" style="left:658.2px;top:645px;font-size:11px;line-height:13px;height:13px;letter-spacing:0.042px;">Appearance variables</div>
<div class="ln" style="left:636px;top:680px;width:418px"></div>
<div class="vl" style="left:847px;top:662px;height:18px"></div>
<div class="t" style="left:661px;top:665px;font-size:11px;line-height:13px;height:13px;letter-spacing:-0.168px;">Scroll position variable horizontal</div>
<div class="ln" style="left:636px;top:699px;width:418px"></div>
<div class="vl" style="left:847px;top:681px;height:18px"></div>
<div class="t" style="left:661px;top:684px;font-size:11px;line-height:13px;height:13px;letter-spacing:-0.155px;">Scroll position variable vertical</div>
<div class="ln" style="left:636px;top:718px;width:418px"></div>
<div class="a" style="left:656px;top:700px;width:397px;height:19px;background:#dcdcdc"></div>
<div class="pm" style="left:641px;top:703px"><i></i><b></b></div>
<div class="t" style="left:658.2px;top:702px;font-size:11px;line-height:13px;height:13px;letter-spacing:0.123px;">Switch frame variable</div>
<div class="ln" style="left:636px;top:737px;width:418px"></div>
<div class="a" style="left:656px;top:719px;width:397px;height:19px;background:#dcdcdc"></div>
<div class="pm" style="left:641px;top:722px"><i></i><b></b></div>
<div class="t" style="left:658.2px;top:721px;font-size:11px;line-height:13px;height:13px;letter-spacing:0.074px;">State variables</div>
<div class="ln" style="left:636px;top:756px;width:418px"></div>
<div class="a" style="left:656px;top:738px;width:397px;height:19px;background:#dcdcdc"></div>
<div class="pm" style="left:641px;top:741px"><i></i><b></b></div>
<div class="t" style="left:658.2px;top:740px;font-size:11px;line-height:13px;height:13px;letter-spacing:0.366px;">Input configuration</div>
<div class="a" style="left:635px;top:761px;width:420px;height:7px;background:#f0f0f0"></div>
<div class="a" style="left:635px;top:768px;width:420px;height:56px;background:#f0f0f0;border:1px solid #d5d5d5"></div>
<div class="t" style="left:640px;top:770px;font-size:11px;line-height:13px;height:13px;letter-spacing:0.187px;">Movement of the whole element in X- and Y-direction</div>
<div class="a" style="left:635px;top:824px;width:420px;height:29px;background:#fff"></div>
<div class="a" style="left:713px;top:827px;width:342px;height:1px;background:#b4b4b4"></div>
<div class="a" style="left:635px;top:825px;width:78px;height:23px;background:#fff;border:1px solid #b0b0b0;border-top:none;border-radius:0 0 2.5px 2.5px"></div>
<svg class="a" style="left:638px;top:829px" width="16" height="16" viewBox="0 0 16 16" shape-rendering="crispEdges"><rect x="0" y="0" width="16" height="16" fill="#c4c4c4"/><rect x="2" y="13" width="12" height="3" fill="#8c8c8c"/><rect x="12" y="6" width="2" height="10" fill="#8c8c8c"/><rect x="0" y="3" width="12" height="11" fill="#000"/><rect x="1" y="4" width="10" height="9" fill="#fff"/><rect x="2" y="9" width="2" height="1" fill="#000"/><rect x="5" y="9" width="5" height="1" fill="#000"/><rect x="2" y="11" width="2" height="1" fill="#000"/><rect x="5" y="11" width="5" height="1" fill="#000"/><rect x="7" y="0" width="1" height="1" fill="#fff"/><rect x="6" y="1" width="1" height="1" fill="#fff"/><rect x="7" y="1" width="1" height="1" fill="#000"/><rect x="8" y="1" width="1" height="1" fill="#fff"/><rect x="5" y="2" width="1" height="1" fill="#fff"/><rect x="6" y="2" width="1" height="1" fill="#000"/><rect x="7" y="2" width="1" height="1" fill="#fff"/><rect x="8" y="2" width="1" height="1" fill="#000"/><rect x="9" y="2" width="1" height="1" fill="#fff"/><rect x="4" y="3" width="1" height="1" fill="#fff"/><rect x="5" y="3" width="1" height="1" fill="#000"/><rect x="6" y="3" width="1" height="1" fill="#fff"/><rect x="7" y="3" width="1" height="1" fill="#000"/><rect x="8" y="3" width="1" height="1" fill="#fff"/><rect x="9" y="3" width="1" height="1" fill="#000"/><rect x="10" y="3" width="1" height="1" fill="#fff"/><rect x="4" y="4" width="1" height="1" fill="#000"/><rect x="5" y="4" width="1" height="1" fill="#fff"/><rect x="6" y="4" width="1" height="1" fill="#000"/><rect x="7" y="4" width="1" height="1" fill="#fff"/><rect x="8" y="4" width="1" height="1" fill="#000"/><rect x="9" y="4" width="1" height="1" fill="#fff"/><rect x="10" y="4" width="1" height="1" fill="#000"/><rect x="5" y="5" width="1" height="1" fill="#000"/><rect x="6" y="5" width="1" height="1" fill="#fff"/><rect x="7" y="5" width="1" height="1" fill="#000"/><rect x="8" y="5" width="1" height="1" fill="#fff"/><rect x="9" y="5" width="1" height="1" fill="#000"/><rect x="6" y="6" width="1" height="1" fill="#000"/><rect x="7" y="6" width="1" height="1" fill="#fff"/><rect x="8" y="6" width="1" height="1" fill="#000"/><rect x="7" y="7" width="1" height="1" fill="#000"/><rect x="7" y="0" width="6" height="1" fill="#000"/><rect x="9" y="1" width="4" height="3" fill="#c8c8c8"/><rect x="13" y="1" width="1" height="4" fill="#000"/><rect x="11" y="5" width="2" height="1" fill="#000"/><rect x="14" y="0" width="2" height="7" fill="#000090"/></svg>
<div class="t" style="left:657.4px;top:830px;font-size:11.5px;line-height:14px;height:14px;letter-spacing:-0.457px;">Properties</div>
<svg class="a" style="left:714px;top:829px" width="15" height="15" viewBox="0 0 15 15" shape-rendering="crispEdges">
<rect x="3" y="1" width="11" height="13" fill="#fff"/>
<rect x="2" y="0" width="1" height="15" fill="#808080"/><rect x="2" y="0" width="10" height="1" fill="#808080"/>
<rect x="14" y="3" width="1" height="12" fill="#000"/><rect x="2" y="14" width="13" height="1" fill="#000"/>
<rect x="11" y="1" width="1" height="3" fill="#000"/><rect x="11" y="3" width="4" height="1" fill="#000"/>
<rect x="12" y="1" width="1" height="1" fill="#000"/><rect x="13" y="2" width="1" height="1" fill="#000"/>
<rect x="9" y="5" width="4" height="1" fill="#a8a8a8"/><rect x="9" y="7" width="4" height="1" fill="#a8a8a8"/><rect x="9" y="9" width="4" height="1" fill="#a8a8a8"/><rect x="6" y="11" width="7" height="1" fill="#c8c8c8"/>
<rect x="4" y="2" width="5" height="5" fill="#8b0000"/><rect x="5" y="3" width="3" height="3" fill="#ffd840"/>
<rect x="5" y="7" width="4" height="4" fill="#000090"/><rect x="5" y="7" width="3" height="3" fill="#ff3070"/>
<rect x="0" y="6" width="5" height="5" fill="#008000"/><rect x="1" y="7" width="3" height="3" fill="#ffff30"/>
</svg>
<div class="t" style="left:734.8px;top:830px;font-size:11.5px;line-height:14px;height:14px;color:#6d6d6d;letter-spacing:-0.414px;">Visualization Toolbox</div>
</body></html>
